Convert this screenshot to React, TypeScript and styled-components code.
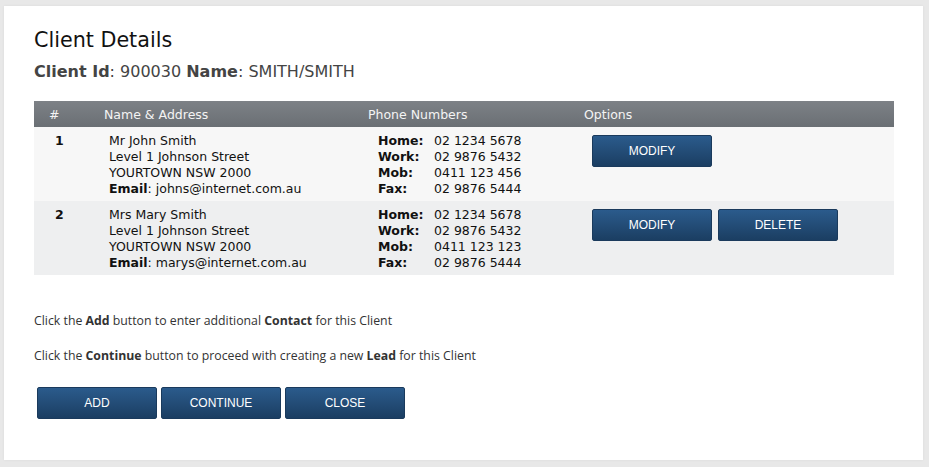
import React from "react";
import styled, {createGlobalStyle} from "styled-components";

interface IContact {
    No: number;
    Name: string;
    Street: string;
    Town: string;
    Email: string;
    Home: string;
    Work: string;
    Mob: string;
    Fax: string;
    CanDelete: boolean;
}

const contacts: IContact[] = [
    {
        No: 1, Name: 'Mr John Smith', Street: 'Level 1 Johnson Street', Town: 'YOURTOWN NSW 2000',
        Email: 'johns@internet.com.au', Home: '02 1234 5678', Work: '02 9876 5432', Mob: '0411 123 456',
        Fax: '02 9876 5444', CanDelete: false
    },
    {
        No: 2, Name: 'Mrs Mary Smith', Street: 'Level 1 Johnson Street', Town: 'YOURTOWN NSW 2000',
        Email: 'marys@internet.com.au', Home: '02 1234 5678', Work: '02 9876 5432', Mob: '0411 123 123',
        Fax: '02 9876 5444', CanDelete: true
    },
];

function App() {
    return (
        <>
            <GlobalStyle/>
            <Card>
                <Title>Client Details</Title>
                <SubTitle><b>Client Id</b>: 900030 <b>Name</b>: SMITH/SMITH</SubTitle>
                <Table>
                    <HeadRow>
                        <HeadCell $pad={15}>#</HeadCell>
                        <HeadCell>Name &amp; Address</HeadCell>
                        <HeadCell>Phone Numbers</HeadCell>
                        <HeadCell>Options</HeadCell>
                    </HeadRow>
                    {contacts.map((c, i) => (
                        <Row key={c.No} $alt={i % 2 === 1}>
                            <NoCell>{c.No}</NoCell>
                            <Cell $pad={15}>
                                <div>{c.Name}</div>
                                <div>{c.Street}</div>
                                <div>{c.Town}</div>
                                <div><b>Email</b>: {c.Email}</div>
                            </Cell>
                            <Cell $pad={20}>
                                <Phones>
                                    <b>Home:</b><span>{c.Home}</span>
                                    <b>Work:</b><span>{c.Work}</span>
                                    <b>Mob:</b><span>{c.Mob}</span>
                                    <b>Fax:</b><span>{c.Fax}</span>
                                </Phones>
                            </Cell>
                            <Options>
                                <Button>MODIFY</Button>
                                {c.CanDelete && <Button>DELETE</Button>}
                            </Options>
                        </Row>
                    ))}
                </Table>
                <Note>Click the <b>Add</b> button to enter additional <b>Contact</b> for this Client</Note>
                <Note $gap={17}>Click the <b>Continue</b> button to proceed with creating a new <b>Lead</b> for this Client</Note>
                <Actions>
                    <Button>ADD</Button>
                    <Button>CONTINUE</Button>
                    <Button>CLOSE</Button>
                </Actions>
            </Card>
        </>
    )
}

export default App;

const GlobalStyle = createGlobalStyle`
  html, body {
    margin: 0;
    background-color: #e8e8e8;
  }
  body {
    padding: 6px 6px 6px 4px;
  }
`
const Card = styled.div`
  width: 919px;
  height: 454px;
  box-sizing: border-box;
  background-color: #fff;
  padding: 21px 30px 0;
  box-shadow: 0 0 3px rgba(0, 0, 0, 0.06);
  font-family: "DejaVu Sans", Verdana, sans-serif;
`
const Title = styled.h1`
  margin: 0;
  font-size: 20.7px;
  line-height: 26px;
  font-weight: normal;
  color: #111;
`
const SubTitle = styled.div`
  margin-top: 9px;
  font-size: 16px;
  line-height: 20px;
  color: #444;
`
const Table = styled.div`
  margin-top: 19px;
  width: 860px;
`
const HeadRow = styled.div`
  display: grid;
  grid-template-columns: 60px 264px 216px 1fr;
  height: 26px;
  align-items: center;
  background: linear-gradient(#7d8186, #6a6f74);
  color: #f4f4f4;
  font-size: 12.5px;
`
const HeadCell = styled.div<{ $pad?: number }>`
  padding-left: ${p => p.$pad ?? 10}px;
`
const Row = styled.div<{ $alt?: boolean }>`
  display: grid;
  grid-template-columns: 60px 264px 216px 1fr;
  padding: 6px 0 4px;
  background-color: ${p => p.$alt ? '#eeeff0' : '#f7f7f7'};
  font-size: 12.5px;
  line-height: 16px;
  color: #111;
`
const NoCell = styled.div`
  padding-left: 21px;
  font-weight: bold;
`
const Cell = styled.div<{ $pad: number }>`
  padding-left: ${p => p.$pad}px;
`
const Phones = styled.div`
  display: grid;
  grid-template-columns: 56px auto;
`
const Options = styled.div`
  display: flex;
  gap: 6px;
  padding: 2px 0 0 18px;
  align-items: flex-start;
`
const Button = styled.button`
  width: 120px;
  height: 32px;
  border: 1px solid #1a3a5c;
  border-radius: 2px;
  background: linear-gradient(#2b5b8c, #1b3e62);
  color: #fff;
  font-family: "Liberation Sans", Arial, sans-serif;
  font-size: 12px;
  cursor: pointer;
`
const Note = styled.p<{ $gap?: number }>`
  margin: ${p => p.$gap ?? 37}px 0 0;
  font-family: "Open Sans", sans-serif;
  font-size: 12.3px;
  line-height: 18px;
  color: #333;
`
const Actions = styled.div`
  display: flex;
  gap: 4px;
  margin: 22px 0 0 3px;
`
